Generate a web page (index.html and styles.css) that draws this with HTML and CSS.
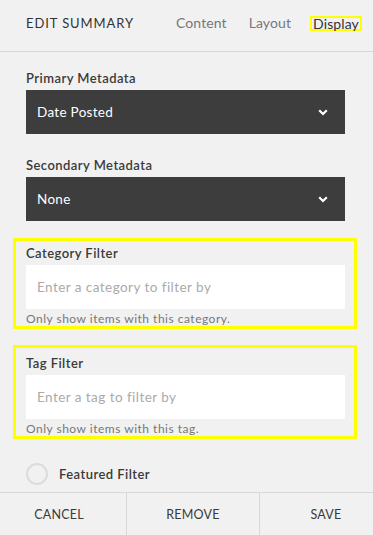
FILE: index.html
```html
<!DOCTYPE html>
<html>
<head>
<meta charset="utf-8">
<link rel="stylesheet" href="styles.css">
</head>
<body>
<div class="panel">
  <header class="header">
    <div class="title">EDIT SUMMARY</div>
    <nav class="tabs">
      <span class="tab">Content</span>
      <span class="tab">Layout</span>
      <span class="tab tab-active">Display</span>
    </nav>
  </header>
  <main class="body">
    <div class="field">
      <div class="label">Primary Metadata</div>
      <div class="select">
        <span>Date Posted</span>
        <svg class="chev" width="10" height="7" viewBox="0 0 10 7"><path d="M1.2 1.3 L5 5 L8.8 1.3" fill="none" stroke="#fff" stroke-width="2.2"/></svg>
      </div>
    </div>
    <div class="field field-second">
      <div class="label">Secondary Metadata</div>
      <div class="select">
        <span>None</span>
        <svg class="chev" width="10" height="7" viewBox="0 0 10 7"><path d="M1.2 1.3 L5 5 L8.8 1.3" fill="none" stroke="#fff" stroke-width="2.2"/></svg>
      </div>
    </div>
    <div class="hl hl-cat">
      <div class="label">Category Filter</div>
      <div class="input">Enter a category to filter by</div>
      <div class="help">Only show items with this category.</div>
    </div>
    <div class="hl hl-tag">
      <div class="label">Tag Filter</div>
      <div class="input">Enter a tag to filter by</div>
      <div class="help">Only show items with this tag.</div>
    </div>
    <div class="toggle-row">
      <span class="radio"></span>
      <span class="toggle-label">Featured Filter</span>
    </div>
  </main>
  <footer class="footer">
    <div class="btn btn-cancel">CANCEL</div>
    <div class="btn btn-remove">REMOVE</div>
    <div class="btn btn-save">SAVE</div>
  </footer>
</div>
</body>
</html>
```

FILE: styles.css
```css
html, body {
  margin: 0;
  padding: 0;
  background: #f1f1f1;
  overflow: hidden;
}
body {
  font-family: "Lato", "Open Sans", sans-serif;
  color: #333;
  width: 373px;
  height: 535px;
}
.panel {
  width: 392px;
  height: 535px;
  display: flex;
  flex-direction: column;
}
.header {
  height: 51px;
  border-bottom: 1px solid #d8d8d8;
  display: flex;
  align-items: center;
  padding-left: 26px;
  box-sizing: border-box;
  height: 52px;
  padding-bottom: 6px;
}
.title {
  font-size: 13px;
  letter-spacing: 0.9px;
  color: #333;
  width: 150px;
}
.tabs {
  display: flex;
  align-items: center;
  gap: 22px;
  font-size: 14px;
  color: #777;
  letter-spacing: 0.1px;
}
.tab-active {
  color: #333;
  border: 2.5px solid #ffff00;
  line-height: 11px;
  height: 11px;
  padding: 0 1px 0 1px;
  margin-left: -3px;
  margin-top: 2px;
}
.body {
  flex: 1;
  padding: 18px 0 0 26px;
}
.label {
  font-size: 13px;
  font-weight: 600;
  line-height: 16px;
  color: #3a3a3a;
  letter-spacing: 0.45px;
}
.select {
  margin-top: 4px;
  width: 319px;
  height: 44px;
  background: #3d3d3d;
  color: #fff;
  font-size: 13.5px;
  display: flex;
  align-items: center;
  justify-content: space-between;
  padding: 0 17px 0 11px;
  box-sizing: border-box;
  letter-spacing: 0.3px;
}
.chev { display: block; }
.field-second { margin-top: 23px; }
.hl {
  margin-left: -13px;
  width: 344px;
  border: 3px solid #ffff00;
  box-sizing: border-box;
  padding: 4px 9px 0 10px;
}
.hl-cat { margin-top: 17px; height: 91px; }
.hl-tag { margin-top: 16px; height: 94px; padding-top: 7px; }
.input {
  margin-top: 4px;
  height: 44px;
  background: #fff;
  color: #aaa;
  font-size: 13.5px;
  display: flex;
  align-items: center;
  padding-left: 11px;
  letter-spacing: 0.45px;
}
.help {
  margin-top: 3px;
  font-size: 12px;
  line-height: 14px;
  color: #777;
  letter-spacing: 0.5px;
}
.toggle-row {
  margin-top: 24px;
  display: flex;
  align-items: center;
  gap: 11px;
}
.radio {
  width: 22px;
  height: 22px;
  border-radius: 50%;
  border: 2px solid #dcdcdc;
  box-sizing: border-box;
}
.toggle-label {
  font-size: 13px;
  font-weight: 600;
  color: #3a3a3a;
  letter-spacing: 0.45px;
}
.footer {
  height: 42px;
  border-top: 1px solid #d8d8d8;
  display: grid;
  grid-template-columns: 126px 133px 133px;
}
.btn {
  display: flex;
  align-items: center;
  justify-content: center;
  font-size: 12.5px;
  letter-spacing: 0.2px;
  color: #3a3a3a;
}
.btn + .btn { border-left: 1px solid #d8d8d8; }
.btn-cancel { padding-right: 8px; }
```
